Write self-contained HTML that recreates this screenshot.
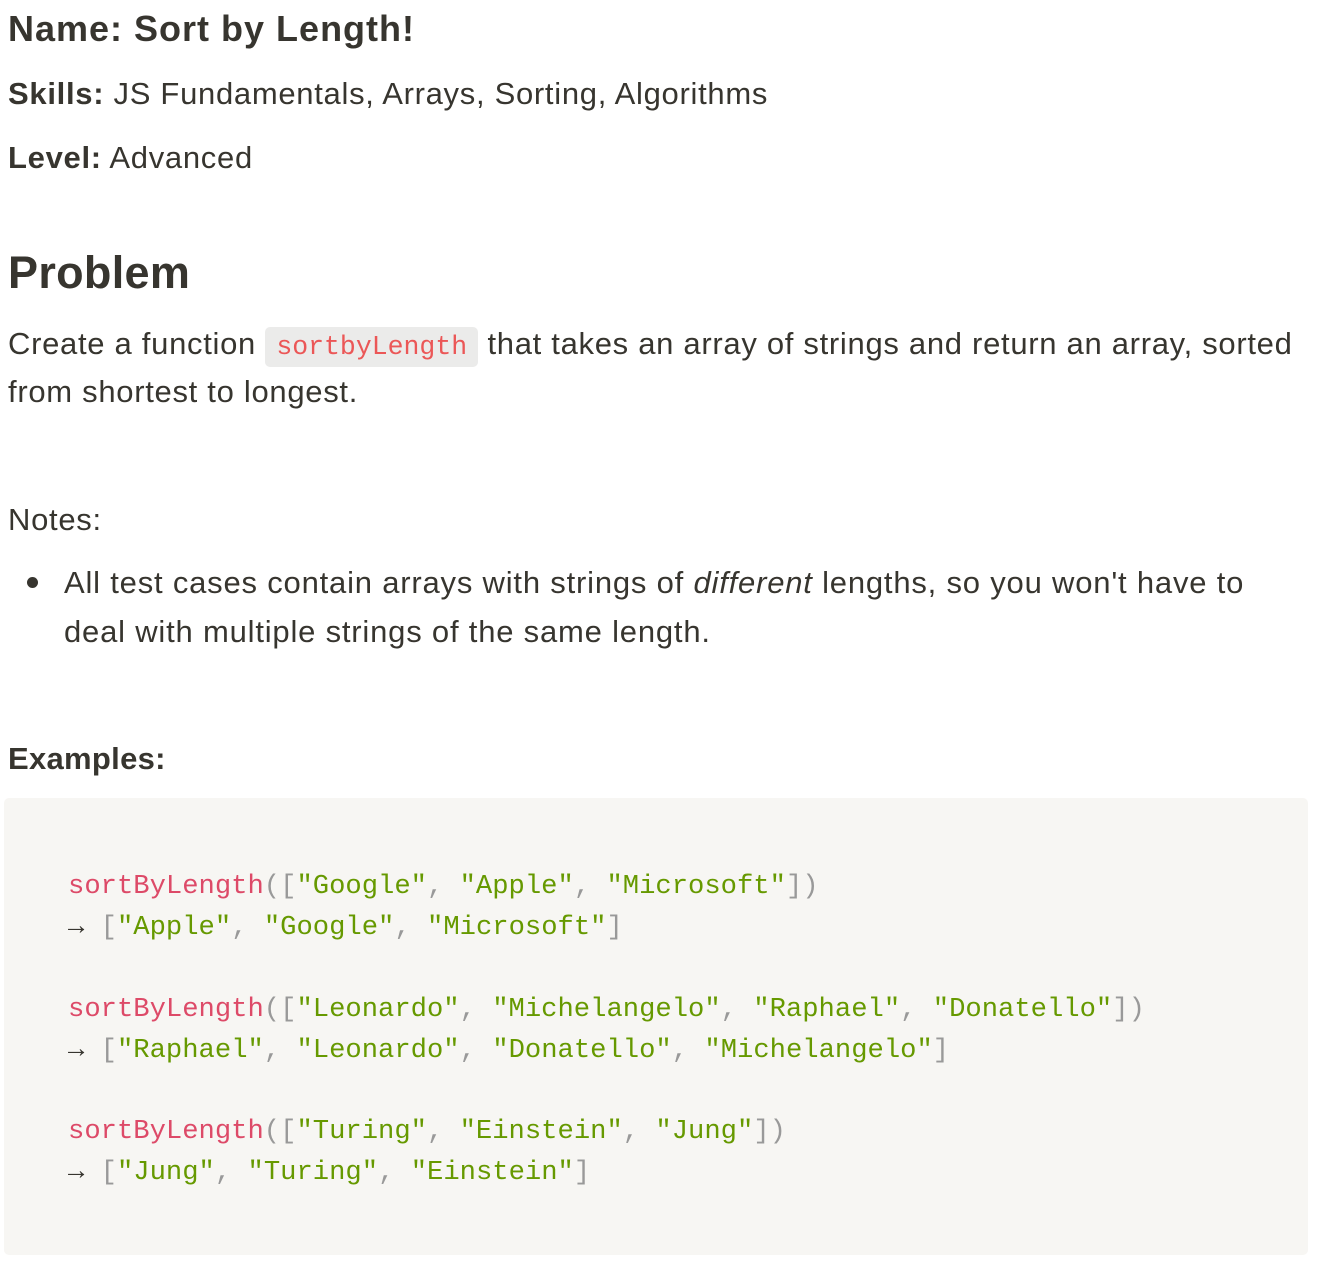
<!DOCTYPE html>
<html><head><meta charset="utf-8"><style>
html,body{margin:0;padding:0;background:#fff;width:1326px;height:1274px;overflow:hidden}
body{position:relative;font-family:"Liberation Sans",sans-serif;color:#37352f}
.l{position:absolute;left:8px;white-space:nowrap;font-size:31px;line-height:47px;letter-spacing:0.7px}
b{font-weight:bold}
.ic{font-family:"Liberation Mono",monospace;font-size:26.5px;letter-spacing:0;color:#eb5757;background:#ebebea;border-radius:5px;padding:0 11px;display:inline-block;line-height:40px}
.code{position:absolute;left:4px;top:798px;width:1304px;height:457px;background:#f7f6f3;border-radius:5px}
.c{position:absolute;left:68px;white-space:pre;font-family:"Liberation Mono",monospace;font-size:27.2px;line-height:41px;color:#37352f}
.f{color:#dd4a68}.p{color:#999}.s{color:#669900}.a{font-weight:bold}
</style></head><body>
<div class="l" style="top:9px;font-size:36px;line-height:40px;font-weight:bold;letter-spacing:1px">Name: Sort by Length!</div>
<div class="l" style="top:70px"><b>Skills:</b> JS Fundamentals, Arrays, Sorting, Algorithms</div>
<div class="l" style="top:134px"><b>Level:</b> Advanced</div>
<div class="l" style="top:247px;font-size:45px;line-height:52px;font-weight:bold;letter-spacing:0.3px">Problem</div>
<div class="l" style="top:320px">Create a function <span class="ic">sortbyLength</span> that takes an array of strings and return an array, sorted</div>
<div class="l" style="top:368px">from shortest to longest.</div>
<div class="l" style="top:496px">Notes:</div>
<div style="position:absolute;left:27px;top:577px;width:11px;height:11px;border-radius:50%;background:#37352f"></div>
<div class="l" style="left:64px;top:559px;letter-spacing:0.8px">All test cases contain arrays with strings of <i>different</i> lengths, so you won't have to</div>
<div class="l" style="left:64px;top:608px;letter-spacing:0.8px">deal with multiple strings of the same length.</div>
<div class="l" style="top:735px;font-weight:bold;letter-spacing:0.3px">Examples:</div>
<div class="code"></div>
<div class="c" style="top:866px"><span class="f">sortByLength</span><span class="p">([</span><span class="s">"Google"</span><span class="p">, </span><span class="s">"Apple"</span><span class="p">, </span><span class="s">"Microsoft"</span><span class="p">])</span></div>
<div class="c" style="top:907px"><span class="a">→</span> <span class="p">[</span><span class="s">"Apple"</span><span class="p">, </span><span class="s">"Google"</span><span class="p">, </span><span class="s">"Microsoft"</span><span class="p">]</span></div>
<div class="c" style="top:989px"><span class="f">sortByLength</span><span class="p">([</span><span class="s">"Leonardo"</span><span class="p">, </span><span class="s">"Michelangelo"</span><span class="p">, </span><span class="s">"Raphael"</span><span class="p">, </span><span class="s">"Donatello"</span><span class="p">])</span></div>
<div class="c" style="top:1030px"><span class="a">→</span> <span class="p">[</span><span class="s">"Raphael"</span><span class="p">, </span><span class="s">"Leonardo"</span><span class="p">, </span><span class="s">"Donatello"</span><span class="p">, </span><span class="s">"Michelangelo"</span><span class="p">]</span></div>
<div class="c" style="top:1111px"><span class="f">sortByLength</span><span class="p">([</span><span class="s">"Turing"</span><span class="p">, </span><span class="s">"Einstein"</span><span class="p">, </span><span class="s">"Jung"</span><span class="p">])</span></div>
<div class="c" style="top:1152px"><span class="a">→</span> <span class="p">[</span><span class="s">"Jung"</span><span class="p">, </span><span class="s">"Turing"</span><span class="p">, </span><span class="s">"Einstein"</span><span class="p">]</span></div>
</body></html>
